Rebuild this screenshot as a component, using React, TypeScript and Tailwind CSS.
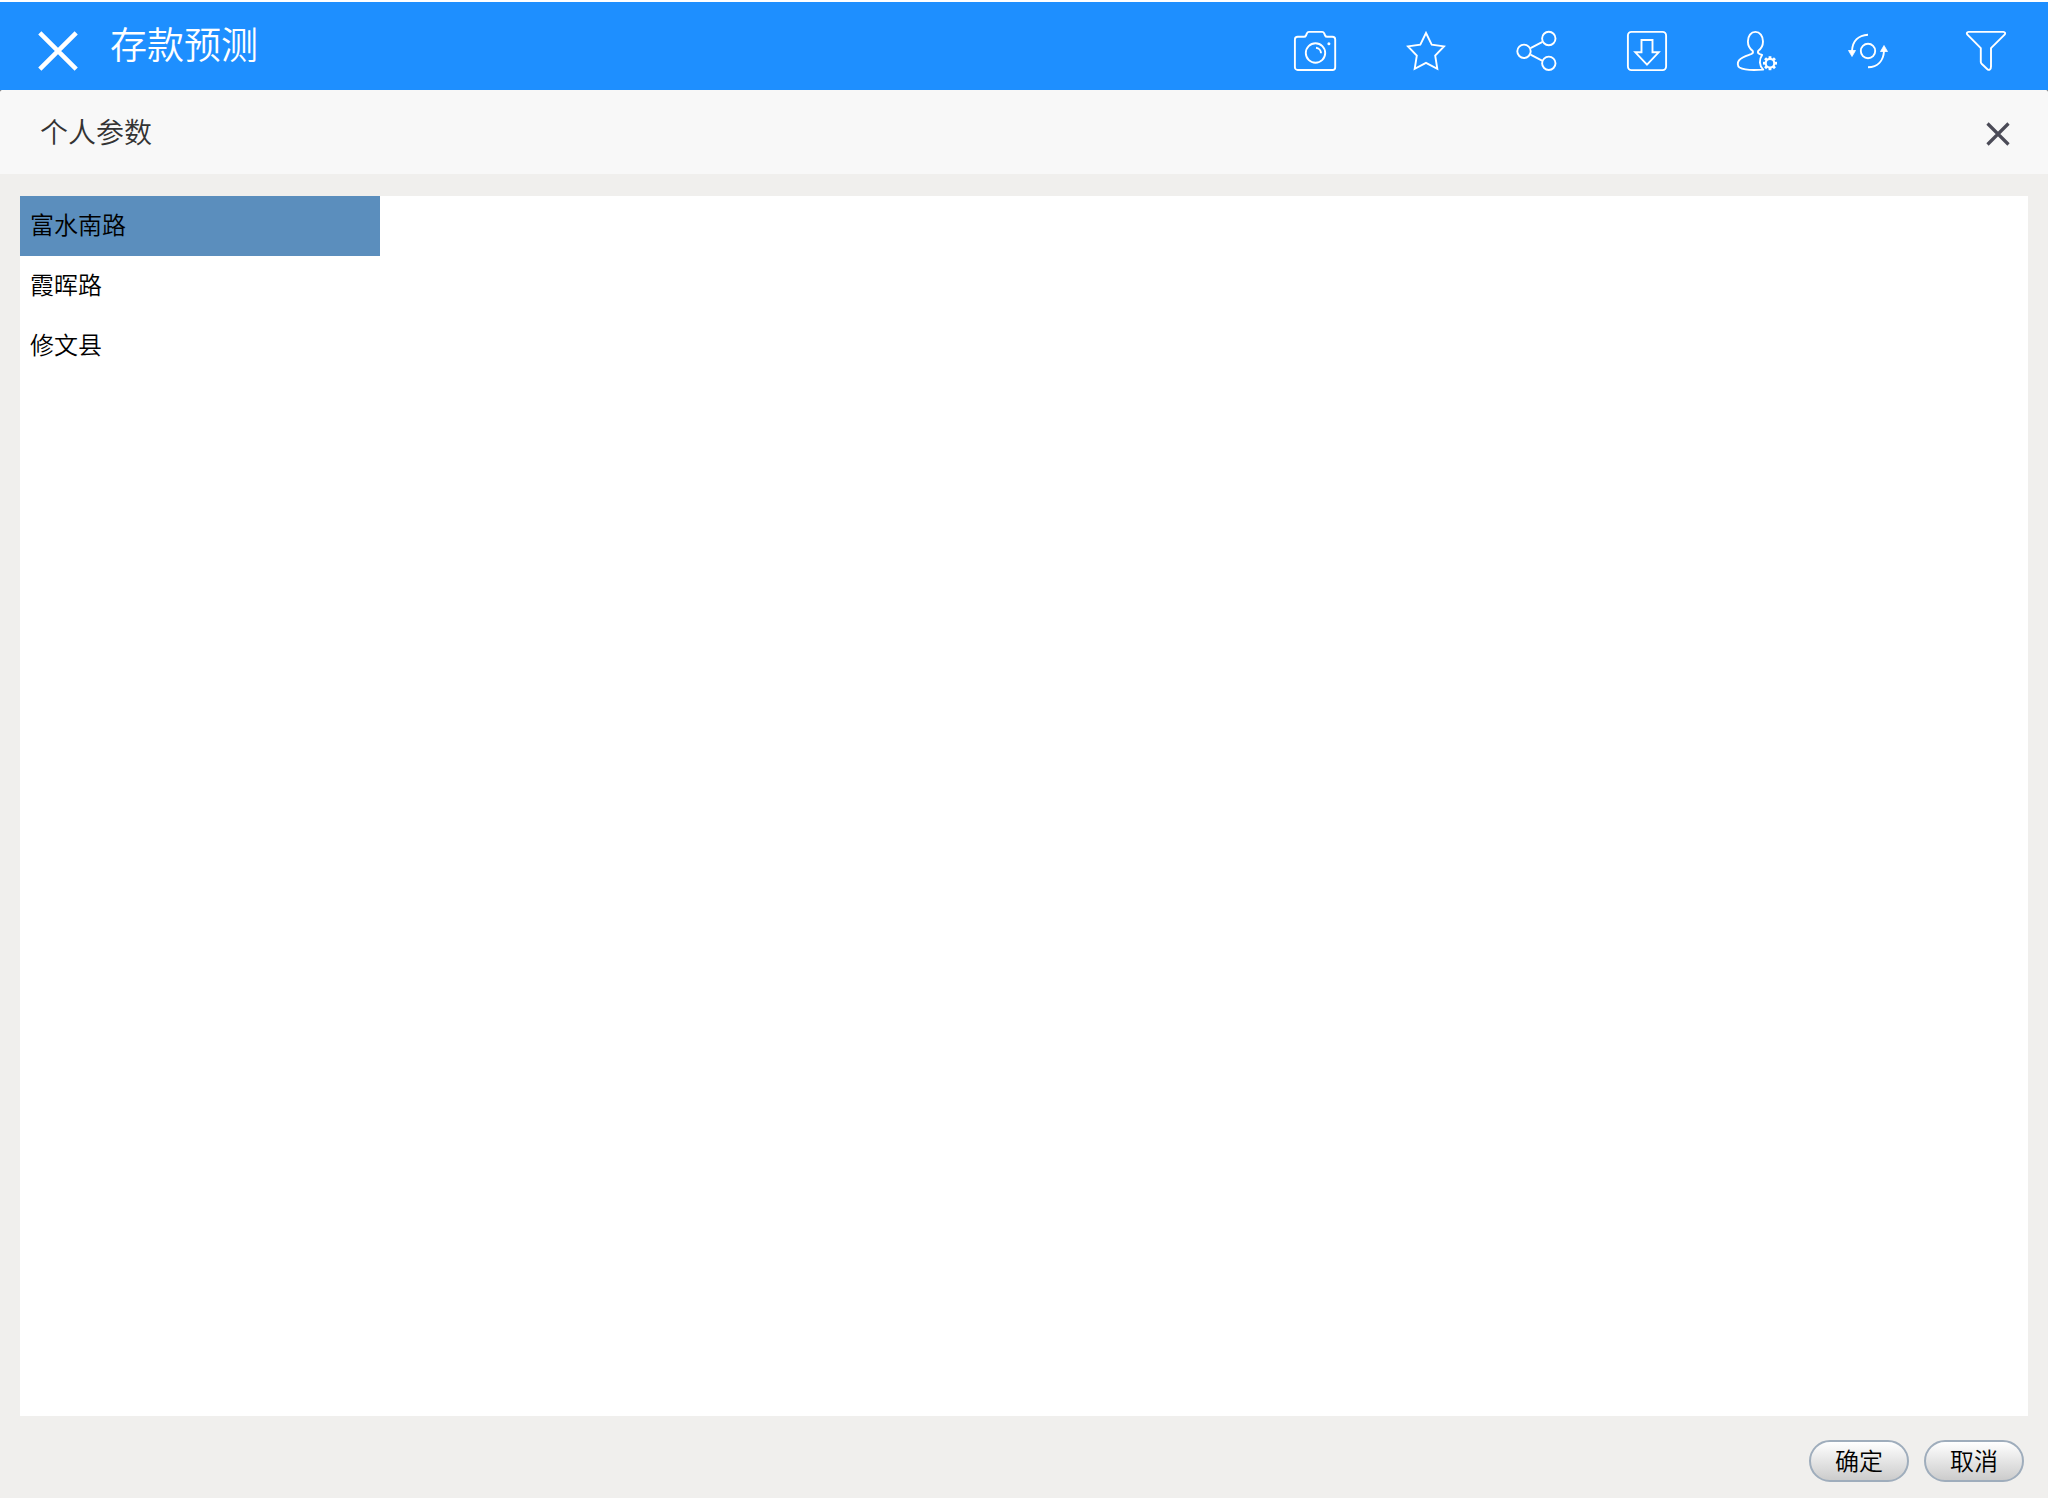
import { useState, type ReactNode } from "react";

const places = ["富水南路", "霞晖路", "修文县"];

const Icon = ({ children }: { children: ReactNode }) => (
  <svg
    viewBox="0 0 40 40"
    className="w-10 h-10 shrink-0 overflow-visible"
    fill="none"
    stroke="currentColor"
    strokeWidth={1.9}
    strokeLinejoin="round"
    aria-hidden="true"
  >
    {children}
  </svg>
);

const GEAR_TEETH = [0, 45, 90, 135, 180, 225, 270, 315];

const tools = [
  {
    name: "截图",
    icon: (
      <Icon>
        <path d="M2.7 5.8H9c1 0 1.6-.4 2-1.3l1-2.3c.3-.8.9-1.3 1.9-1.3h13.3c1 0 1.6.5 1.9 1.3l1 2.3c.4.9 1 1.3 2 1.3h5.3a2.8 2.8 0 0 1 2.8 2.8v27.6a2.8 2.8 0 0 1-2.8 2.8H2.7a2.8 2.8 0 0 1-2.8-2.8V8.6a2.8 2.8 0 0 1 2.8-2.8Z" />
        <circle cx="20.5" cy="22" r="9.7" />
        <path d="M21 16.8a5.5 5.5 0 0 1 5 5.5" />
        <circle cx="33.9" cy="12.7" r="1.5" fill="currentColor" stroke="none" />
      </Icon>
    ),
  },
  {
    name: "收藏",
    icon: (
      <Icon>
        <path
          strokeLinejoin="miter"
          d="M20 2 25.7 13.6 38 15.4 29.2 24.6 31.3 37.8 20 31.8 8.7 37.8 10.8 24.6 2 15.4 14.3 13.6Z"
        />
      </Icon>
    ),
  },
  {
    name: "分享",
    icon: (
      <Icon>
        <circle cx="8" cy="20.3" r="6.7" />
        <circle cx="32.8" cy="7.5" r="6.7" />
        <circle cx="32.8" cy="32.3" r="6.7" />
        <path d="M14.5 17.2 26.5 10.9M14.5 23.6 26.5 29.8" />
      </Icon>
    ),
  },
  {
    name: "下载",
    icon: (
      <Icon>
        <rect x="0.9" y="0.9" width="38.2" height="38.2" rx="3.5" />
        <path
          strokeLinejoin="miter"
          d="M14.5 9h11v12.3h6.2L20 33.6 8.3 21.3h6.2Z"
        />
      </Icon>
    ),
  },
  {
    name: "个人参数",
    icon: (
      <Icon>
        <path d="M26.2 38.6C17 39.4 7 39 2.5 36.5.4 35.2.3 31.5 2 29.3 5 25.8 10 24.6 14 23.2c1.8-.7 2.3-1.7 1.8-3.2C12.4 17.6 10.9 14 10.9 10.5 10.9 4.8 14 .9 18.4.9s7.6 3.9 7.6 9.6c0 3.5-1.5 7.1-4.9 9.5-.5 1.5 0 2.5 1.8 3.2l2.2.8c-3.2 4.5-3 10.5 1.1 14.6Z" />
        <circle cx="33" cy="32.2" r="4.3" strokeWidth={2.2} />
        {GEAR_TEETH.map((deg) => (
          <path
            key={deg}
            d="M33 27.8V25.2"
            strokeWidth={2.8}
            transform={`rotate(${deg} 33 32.2)`}
          />
        ))}
      </Icon>
    ),
  },
  {
    name: "刷新",
    icon: (
      <Icon>
        <circle cx="20" cy="20" r="7.2" />
        <path d="M20 3.7C10.500 4.2 4.5 10 4 20M20 36.3c9.500-.5 15.500-6.300 16-16.300" />
        <path d="M0.5 19.5h7L4 25.5ZM32.5 20.5h7L36 14.5Z" fill="currentColor" strokeWidth={0.8} />
      </Icon>
    ),
  },
];

export default function App() {
  const [selected, setSelected] = useState(places[0]);

  return (
    <div className="flex flex-col min-h-screen pt-0.5 bg-white font-['Noto_Sans_CJK_SC',sans-serif]">
      <header className="flex h-[88px] bg-[#1e8fff] text-white">
        <button className="flex items-center w-[110px] pt-2.5 pl-[38px]" aria-label="返回">
          <Icon>
            <path d="M1.8 1.8 38.2 38.2M38.2 1.8 1.8 38.2" strokeWidth={4.5} />
          </Icon>
        </button>
        <h1 className="flex-1 pt-[13px] text-[37px] leading-[56px] font-[350]">存款预测</h1>

        <nav className="flex pt-2.5" aria-label="工具栏">
          <div className="grid grid-cols-6 w-[663px]">
            {tools.map((tool) => (
              <button
                key={tool.name}
                className="flex items-center justify-center"
                aria-label={tool.name}
              >
                {tool.icon}
              </button>
            ))}
          </div>
          <button className="flex items-center justify-center w-[125px]" aria-label="筛选">
            <Icon>
              <path d="M2.6.9h34.8c1.8 0 2.3 1.6 1.2 2.7L25 17.2v18.3c0 3-1.8 4.2-3.6 2.7l-5.8-5.5c-.6-.6-.8-1-.8-1.8V17.2L1.4 3.6C.3 2.5.8.9 2.6.9Z" />
            </Icon>
          </button>
        </nav>
      </header>

      <section className="flex flex-col flex-1" aria-labelledby="dialog-title">
        <div className="bg-[#555]">
          <div className="flex items-center justify-between h-[84px] pl-10 pr-[38px] bg-[#f8f8f8] rounded-t-[2px]">
            <h2 id="dialog-title" className="pb-0.5 text-[28px] leading-10 font-[350] text-[#333]">
              个人参数
            </h2>
            <button className="pt-1 text-[#4b4b57]" aria-label="关闭">
              <svg viewBox="0 0 24 24" className="w-6 h-6" fill="none" aria-hidden="true">
                <path d="M1.5 1.5 22.5 22.5M22.5 1.5 1.5 22.5" stroke="currentColor" strokeWidth={3.2} />
              </svg>
            </button>
          </div>
        </div>

        <div className="flex flex-col flex-1 px-5 pt-[22px] bg-[#f0efed]">
          <ul className="flex-1 bg-white">
            {places.map((place) => (
              <li key={place} className="w-[360px]">
                <button
                  onClick={() => setSelected(place)}
                  aria-pressed={selected === place}
                  className={`w-full h-[60px] pl-2.5 pb-1 text-left text-2xl font-[350] text-black ${
                    selected === place ? "bg-[#5b8ebd]" : ""
                  }`}
                >
                  {place}
                </button>
              </li>
            ))}
          </ul>

          <footer className="flex justify-end gap-[15px] pt-6 pb-4 pr-1">
            {["确定", "取消"].map((label) => (
              <button
                key={label}
                className="w-[100px] h-[42px] pb-0.5 border-2 border-[#9fadbc] rounded-full bg-linear-to-b from-white to-[#cccccc] text-2xl leading-8 font-[350] text-black"
              >
                {label}
              </button>
            ))}
          </footer>
        </div>
      </section>
    </div>
  );
}
